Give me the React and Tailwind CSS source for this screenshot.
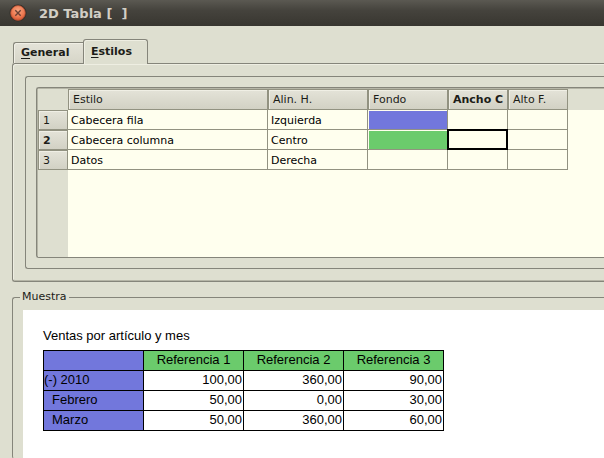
const styles = [
  { name: "Cabecera fila", align: "Izquierda", fill: "bg-[#7277dc]" },
  { name: "Cabecera columna", align: "Centro", fill: "bg-[#6bcb6c]" },
  { name: "Datos", align: "Derecha", fill: "" },
];

const headers = ["Estilo", "Alin. H.", "Fondo", "Ancho C", "Alto F."];

const report = [
  { label: "(-) 2010", indent: false, values: ["100,00", "360,00", "90,00"] },
  { label: "Febrero", indent: true, values: ["50,00", "0,00", "30,00"] },
  { label: "Marzo", indent: true, values: ["50,00", "360,00", "60,00"] },
];

const headFace =
  "border border-[#929281] bg-linear-to-b from-[#e4e3d8] to-[#d2d1c4] p-0 text-left whitespace-nowrap overflow-hidden shadow-[inset_1px_1px_0_#f0efe5]";
const cell = "h-5 border-r border-b border-[#929281] p-0 pt-[3px] pl-[3px] text-black";

function TitleBar() {
  return (
    <header className="flex h-[26px] items-center bg-linear-to-b from-[#5b5952] via-[#45433d] via-40% to-[#383630] pl-[9px]">
      <button type="button" aria-label="Cerrar" className="size-[18px] shrink-0">
        <svg viewBox="0 0 18 18" className="block size-full">
          <defs>
            <radialGradient id="close" cx="50%" cy="35%" r="65%">
              <stop offset="0" stopColor="#f8a580" />
              <stop offset="0.65" stopColor="#ed7850" />
              <stop offset="1" stopColor="#cf5431" />
            </radialGradient>
          </defs>
          <circle cx="9" cy="9" r="8.5" fill="#302e29" />
          <circle cx="9" cy="9" r="7.4" fill="url(#close)" stroke="#a84a31" strokeWidth="0.7" />
          <path d="M6.3 6.3l5.4 5.4M11.7 6.3l-5.4 5.4" stroke="#6b4034" strokeWidth="1.4" />
        </svg>
      </button>
      <h1 className="ml-3 pt-px text-[13px] leading-4 font-bold whitespace-pre text-[#d3cfc6]">2D Tabla [  ]</h1>
    </header>
  );
}

function StyleTable() {
  return (
    <table className="h-[168px] w-full table-fixed border-separate border-spacing-0 bg-[#ffffee]">
      <colgroup>
        <col className="w-[30px]" />
        <col className="w-[200px]" />
        <col className="w-[100px]" />
        <col className="w-20" />
        <col className="w-[60px]" />
        <col className="w-[60px]" />
        <col />
      </colgroup>
      <thead>
        <tr>
          <td className="h-[21px] bg-[#dedfd0] p-0" />
          {headers.map((title) => (
            <th
              key={title}
              scope="col"
              className={`${headFace} h-[21px] pl-1 ${title === "Ancho C" ? "font-bold" : "font-normal"}`}
            >
              {title}
            </th>
          ))}
          <td className="bg-[#dedfd0] p-0" />
        </tr>
      </thead>
      <tbody>
        {styles.map((row, i) => (
          <tr key={row.name}>
            <th scope="row" className={`${headFace} h-5 pt-[2px] pl-1 ${i === 1 ? "font-bold" : "font-normal"}`}>
              {i + 1}
            </th>
            <td className={cell}>{row.name}</td>
            <td className={cell}>{row.align}</td>
            <td className="h-5 border-r border-b border-[#929281] p-0 pt-px pl-px">
              <div className={`h-[18px] ${row.fill}`} />
            </td>
            {i === 1 ? (
              <td className="h-5 border-r border-b border-black p-0 shadow-[inset_-1px_-1px_0_#000,inset_1px_0_0_#000,-1px_0_0_#000,0_-1px_0_#000,-1px_-1px_0_#000,inset_0_1px_0_#000]" />
            ) : (
              <td className={cell} />
            )}
            <td className={cell} />
            <td className="p-0" />
          </tr>
        ))}
        <tr>
          <td className="bg-[#dedfd0] p-0" />
          <td colSpan={6} className="p-0" />
        </tr>
      </tbody>
    </table>
  );
}

function Preview() {
  return (
    <div className="ml-[10px] min-h-[148px] bg-white pt-[18px] pb-7 pl-5 font-['Liberation_Sans',sans-serif] text-[13px] leading-4 text-black">
      <p>Ventas por artículo y mes</p>
      <table className="mt-[6px] w-[401px] table-fixed border-collapse">
        <thead>
          <tr>
            <td className="h-5 border border-black bg-[#7277dc] p-0" />
            {[1, 2, 3].map((n) => (
              <th key={n} scope="col" className="h-5 border border-black bg-[#6bcb6c] p-0 pb-[2px] text-center font-normal">
                Referencia {n}
              </th>
            ))}
          </tr>
        </thead>
        <tbody>
          {report.map((row) => (
            <tr key={row.label}>
              <th
                scope="row"
                className={`h-5 border border-black bg-[#7277dc] p-0 pb-[2px] text-left font-normal ${row.indent ? "pl-2" : ""}`}
              >
                {row.label}
              </th>
              {row.values.map((value, i) => (
                <td key={i} className="h-5 border border-black p-0 pr-px pb-[2px] text-right">
                  {value}
                </td>
              ))}
            </tr>
          ))}
        </tbody>
      </table>
    </div>
  );
}

export default function App() {
  return (
    <div className="min-h-screen overflow-hidden bg-[#dedfd0] font-['DejaVu_Sans',sans-serif] text-[11px] leading-4 text-[#1c1c18]">
      <TitleBar />
      <main className="pt-[13px] pl-3">
        <div role="tablist" className="relative flex items-end pl-px">
          <button
            type="button"
            role="tab"
            aria-selected="false"
            className="h-[21px] w-[70px] rounded-tl-[3px] border-t border-l border-[#85857a] bg-linear-to-b from-[#e4e3d8] to-[#d6d5c8] pl-[7px] text-left font-bold shadow-[inset_1px_1px_0_#f0efe5]"
          >
            <span className="underline underline-offset-2">G</span>eneral
          </button>
          <button
            type="button"
            role="tab"
            aria-selected="true"
            className="-mb-px h-[25px] w-[65px] rounded-t-[3px] border border-b-0 border-[#85857a] bg-[#dedfd0] pl-[7px] text-left font-bold shadow-[inset_1px_1px_0_#eeeee2]"
          >
            <span className="underline underline-offset-2">E</span>stilos
          </button>
        </div>
        <section
          role="tabpanel"
          aria-label="Estilos"
          className="rounded-l-[3px] border border-r-0 border-[#85857a] py-3 pl-3 shadow-[inset_1px_1px_0_#eeeee2,inset_0_-1px_0_#b5b5a6]"
        >
          <div className="rounded-l-[3px] border border-r-0 border-[#85857a] py-[10px] pl-[10px]">
            <div className="rounded-l-[3px] border border-r-0 border-[#85857a] pt-px pl-px shadow-[inset_1px_1px_0_#b5b5a6]">
              <StyleTable />
            </div>
          </div>
        </section>
        <fieldset className="mt-[7px] min-w-0 rounded-l-[3px] border border-r-0 border-b-0 border-[#85857a]">
          <legend className="ml-[7px] px-[2px]">Muestra</legend>
          <div className="pt-[5px]">
            <Preview />
          </div>
        </fieldset>
      </main>
    </div>
  );
}
